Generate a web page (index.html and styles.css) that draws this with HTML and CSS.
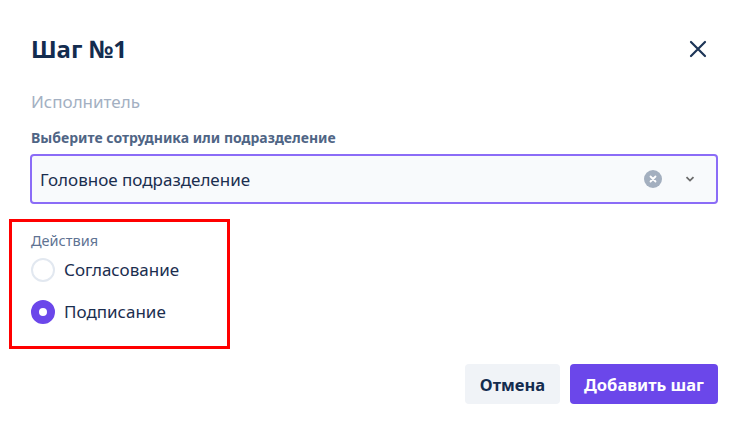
FILE: index.html
```html
<!DOCTYPE html>
<html lang="ru">
<head>
  <meta charset="UTF-8" />
  <title>Шаг №1</title>
  <link rel="stylesheet" href="styles.css">
</head>
<body>
  <!-- Step dialog -->
  <div class="modal">
    <header class="modal-header">
      <h1>Шаг №1</h1>
      <button class="close-btn" aria-label="Закрыть">
        <svg width="18" height="18" viewBox="0 0 18 18"><path d="M2 2L16 16M16 2L2 16" stroke="#1d3557" stroke-width="2.2" stroke-linecap="round"/></svg>
      </button>
    </header>

    <div class="section-title">Исполнитель</div>

    <label class="field-label">Выберите сотрудника или подразделение</label>
    <div class="select">
      <span class="select-value">Головное подразделение</span>
      <span class="select-clear">
        <svg width="8" height="8" viewBox="0 0 8 8"><path d="M1.5 1.5L6.5 6.5M6.5 1.5L1.5 6.5" stroke="#fff" stroke-width="1.8" stroke-linecap="round"/></svg>
      </span>
      <span class="select-arrow">
        <svg width="10" height="6" viewBox="0 0 10 6"><path d="M1.5 1.2L5 4.6L8.5 1.2" fill="none" stroke="#6b6b6b" stroke-width="1.8"/></svg>
      </span>
    </div>

    <!-- Actions (highlighted) -->
    <div class="actions">
      <div class="actions-title">Действия</div>
      <div class="radio">
        <span class="radio-dot"></span>
        <span>Согласование</span>
      </div>
      <div class="radio checked">
        <span class="radio-dot"></span>
        <span>Подписание</span>
      </div>
    </div>

    <footer class="modal-footer">
      <button class="btn btn-cancel">Отмена</button>
      <button class="btn btn-primary">Добавить шаг</button>
    </footer>
  </div>
</body>
</html>
```

FILE: styles.css
```css
/* Base */
html, body {
  margin: 0;
  padding: 0;
  background: #ffffff;
  font-family: 'Noto Sans', 'Open Sans', sans-serif;
  color: #1b2e4f;
}
.modal {
  width: 748px;
  height: 434px;
  box-sizing: border-box;
  padding: 33px 30px 0 31px;
  background: #ffffff;
}
/* Header */
.modal-header {
  display: flex;
  justify-content: space-between;
  align-items: center;
  height: 32px;
}
.modal-header h1 {
  margin: 0;
  font-size: 24px;
  line-height: 32px;
  font-weight: 700;
  color: #132c4f;
}
.close-btn {
  border: none;
  background: transparent;
  padding: 0;
  margin-right: 11px;
  width: 18px;
  height: 18px;
  cursor: pointer;
}
.section-title {
  margin-top: 25px;
  font-size: 17px;
  line-height: 24px;
  color: #a3b0c2;
}
.field-label {
  display: block;
  margin-top: 15px;
  font-size: 14px;
  line-height: 18px;
  font-weight: 700;
  color: #4f6585;
}
/* Select */
.select {
  margin-top: 7px;
  margin-left: -1px;
  height: 50px;
  box-sizing: border-box;
  border: 2px solid #8b6cf7;
  border-radius: 4px;
  background: #f8fafc;
  display: flex;
  align-items: center;
  padding: 0 21px 0 8px;
}
.select-value {
  flex: 1;
  font-size: 17px;
  color: #1b2e4f;
}
.select-clear {
  width: 18px;
  height: 18px;
  border-radius: 50%;
  background: #a3afbf;
  display: flex;
  align-items: center;
  justify-content: center;
  margin-right: 23px;
}
.select-arrow {
  display: flex;
  align-items: center;
}
/* Actions group with red highlight */
.actions {
  margin-top: 15px;
  margin-left: -22px;
  width: 221px;
  height: 130px;
  box-sizing: border-box;
  border: 3px solid #ff0000;
  padding: 8px 0 0 19px;
}
.actions-title {
  font-size: 14.5px;
  line-height: 20px;
  color: #5f7393;
}
.radio {
  display: flex;
  align-items: center;
  gap: 9px;
  margin-top: 8px;
  font-size: 17px;
  line-height: 24px;
  color: #1b2e4f;
}
.radio + .radio { margin-top: 18px; }
.radio-dot {
  width: 24px;
  height: 24px;
  box-sizing: border-box;
  border-radius: 50%;
  border: 2px solid #e2e8f0;
  background: #ffffff;
}
.radio.checked .radio-dot {
  border: 8px solid #6b47ea;
}
/* Footer */
.modal-footer {
  display: flex;
  justify-content: flex-end;
  gap: 10px;
  margin-top: 15px;
}
.btn {
  height: 40px;
  border: none;
  border-radius: 4px;
  font-family: inherit;
  font-size: 16.5px;
  font-weight: 700;
  padding: 0;
  white-space: nowrap;
  cursor: pointer;
}
.btn-cancel {
  width: 95px;
  background: #f0f3f7;
  color: #132c4f;
}
.btn-primary {
  width: 148px;
  background: #6b47ea;
  color: #ffffff;
}
```
